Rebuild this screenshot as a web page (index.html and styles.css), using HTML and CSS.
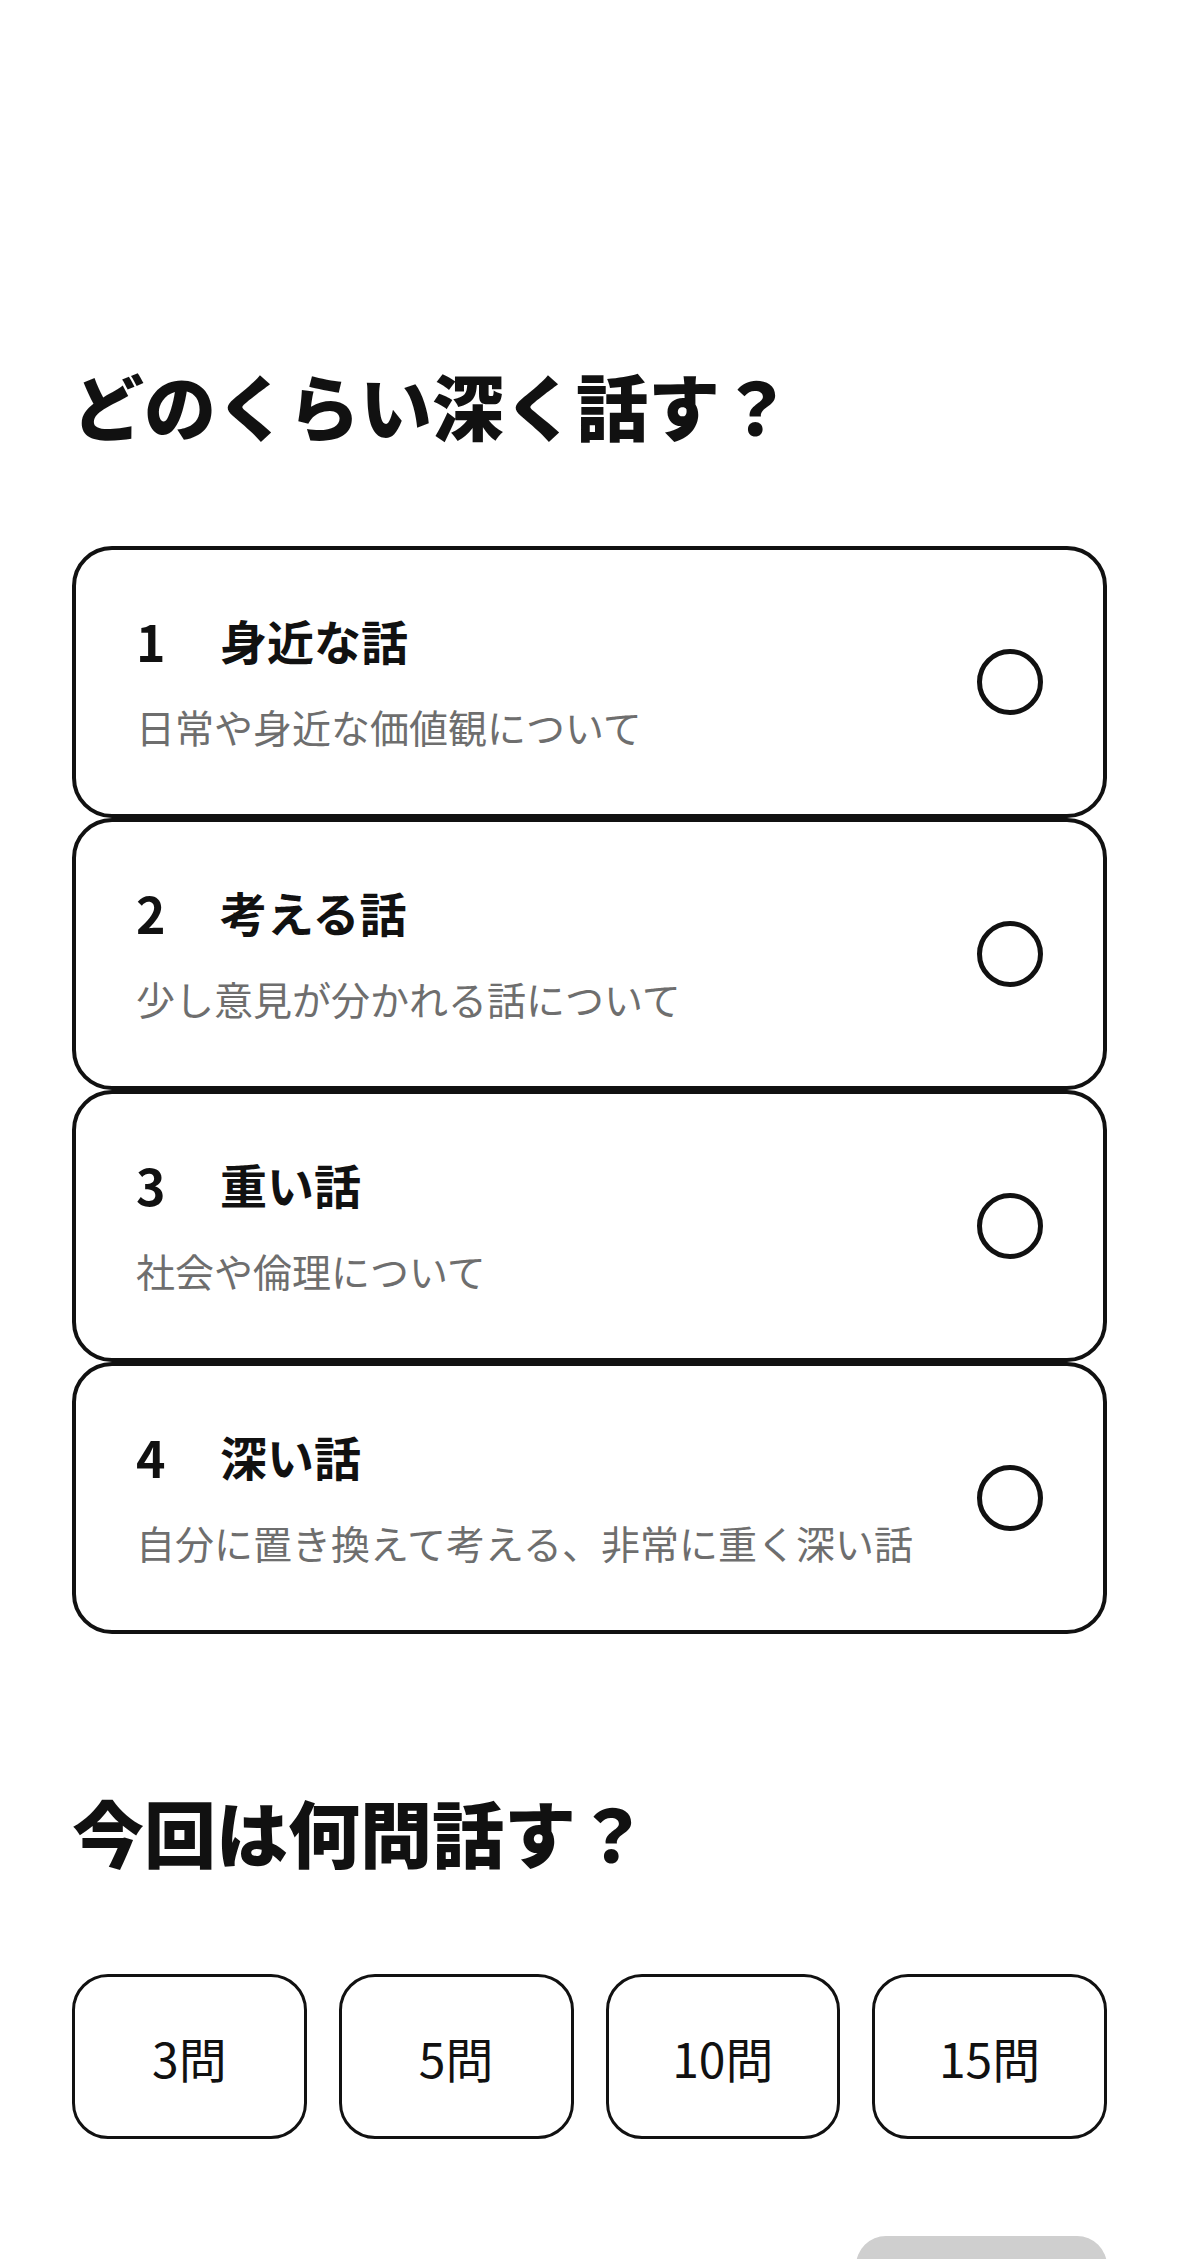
FILE: index.html
```html
<!DOCTYPE html>
<html lang="ja">
<head>
<meta charset="utf-8">
<title>どのくらい深く話す？</title>
<link rel="stylesheet" href="styles.css">
</head>
<body>
<div class="page">
  <h1 class="heading">どのくらい深く話す？</h1>
  <div class="levels">
    <div class="level">
      <div class="level-text">
        <div class="level-title"><span class="level-num">1</span><span>身近な話</span></div>
        <div class="level-desc">日常や身近な価値観について</div>
      </div>
      <span class="radio"></span>
    </div>
    <div class="level">
      <div class="level-text">
        <div class="level-title"><span class="level-num">2</span><span>考える話</span></div>
        <div class="level-desc">少し意見が分かれる話について</div>
      </div>
      <span class="radio"></span>
    </div>
    <div class="level">
      <div class="level-text">
        <div class="level-title"><span class="level-num">3</span><span>重い話</span></div>
        <div class="level-desc">社会や倫理について</div>
      </div>
      <span class="radio"></span>
    </div>
    <div class="level">
      <div class="level-text">
        <div class="level-title"><span class="level-num">4</span><span>深い話</span></div>
        <div class="level-desc">自分に置き換えて考える、非常に重く深い話</div>
      </div>
      <span class="radio"></span>
    </div>
  </div>

  <h2 class="heading heading-count">今回は何問話す？</h2>
  <div class="counts">
    <div class="count">3問</div>
    <div class="count">5問</div>
    <div class="count">10問</div>
    <div class="count">15問</div>
  </div>

  <div class="footer">
    <div class="next"></div>
  </div>
</div>
</body>
</html>
```

FILE: styles.css
```css
* {
  box-sizing: border-box;
}

html,
body {
  margin: 0;
  background: #ffffff;
}

body {
  font-family: "Noto Sans CJK JP", "Noto Sans", sans-serif;
  color: #111111;
}

.page {
  height: 2259px;
  overflow: hidden;
  padding: 354px 72px 0;
}

.heading {
  margin: 0;
  font-size: 72px;
  line-height: 100px;
  font-weight: 900;
  color: #111111;
}

.levels {
  margin-top: 92px;
  display: flex;
  flex-direction: column;
}

.level {
  display: flex;
  align-items: center;
  height: 272px;
  border: 4px solid #111111;
  border-radius: 40px;
  padding: 0 60px;
  background: #ffffff;
}

.level-text {
  flex: 1;
}

.level-title {
  display: flex;
  font-size: 47px;
  line-height: 56px;
  font-weight: 700;
}

.level-num {
  width: 84px;
  flex: none;
  font-size: 50px;
}

.level-desc {
  margin-top: 32px;
  font-size: 39px;
  line-height: 52px;
  color: #6e6e6e;
}

.radio {
  flex: none;
  width: 66px;
  height: 66px;
  border: 5px solid #111111;
  border-radius: 50%;
}

.heading-count {
  margin-top: 147px;
}

.counts {
  margin-top: 93px;
  display: grid;
  grid-template-columns: repeat(4, 1fr);
  gap: 32px;
}

.count {
  height: 165px;
  border: 3px solid #111111;
  border-radius: 36px;
  display: flex;
  align-items: center;
  justify-content: center;
  font-size: 48px;
  font-weight: 400;
  color: #111111;
}

.footer {
  margin-top: 97px;
  display: flex;
  justify-content: flex-end;
}

.next {
  width: 251px;
  height: 110px;
  border-radius: 30px;
  background: #cfcfcf;
}
```
